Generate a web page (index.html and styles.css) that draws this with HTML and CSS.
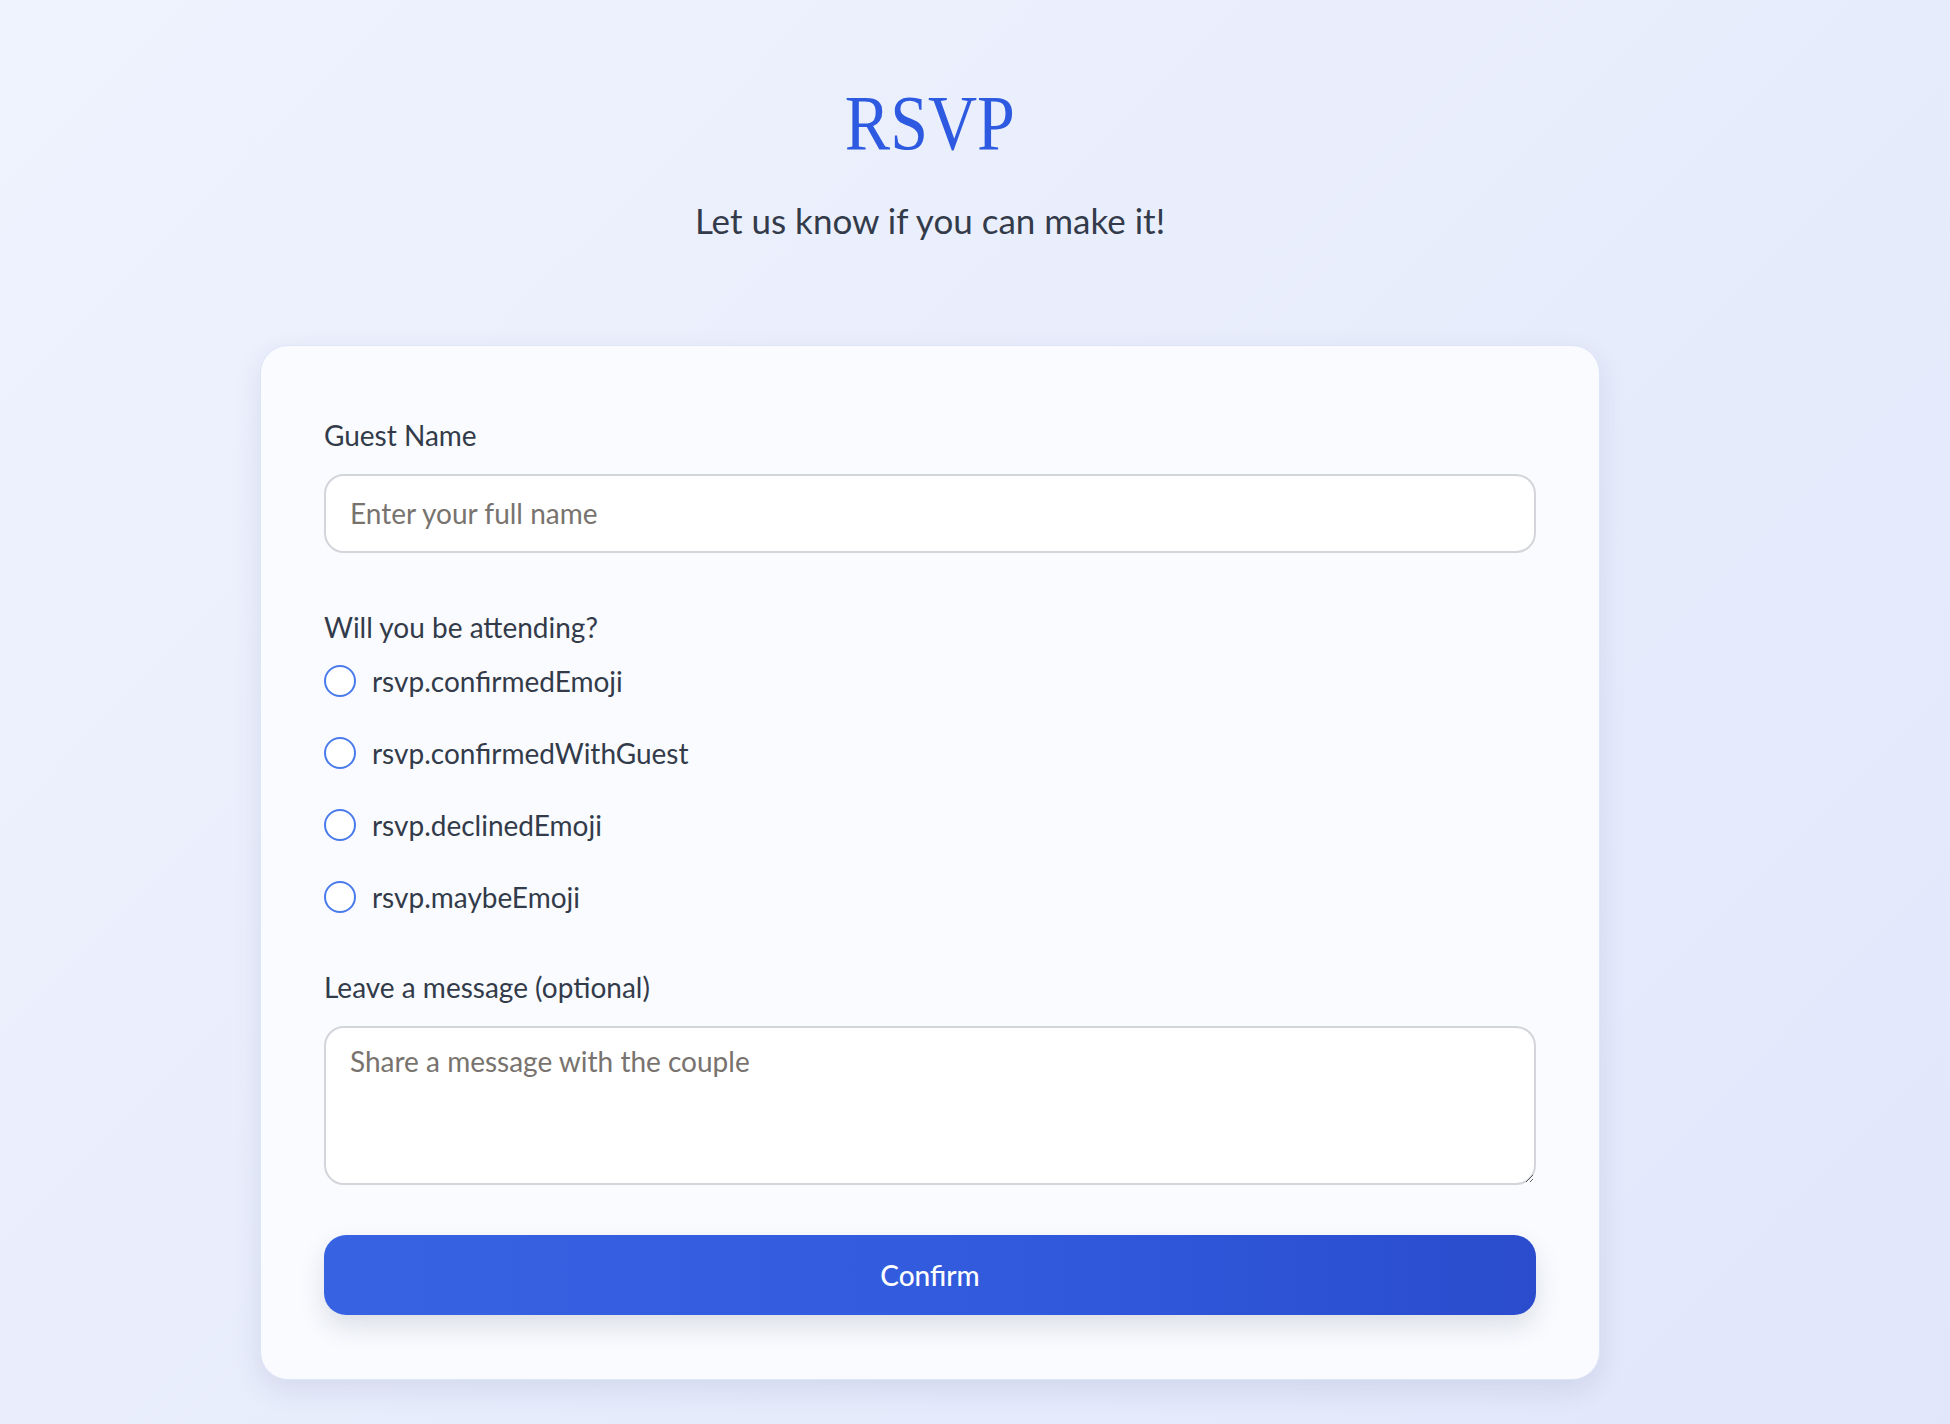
FILE: index.html
```html
<!DOCTYPE html>
<html lang="en">
<head>
<meta charset="utf-8">
<title>RSVP</title>
<link rel="stylesheet" href="styles.css">
</head>
<body>
<div class="page">
  <main class="container">
    <header class="hero">
      <h1 class="title"><span class="title-text">RSVP</span></h1>
      <p class="subtitle">Let us know if you can make it!</p>
    </header>
    <form class="card">
      <div class="field">
        <label class="label" for="name">Guest Name</label>
        <input class="input" id="name" type="text" placeholder="Enter your full name">
      </div>
      <div class="field field-attend">
        <div class="label label-attend">Will you be attending?</div>
        <div class="options">
          <label class="option"><input type="radio" name="att" class="radio"><span>rsvp.confirmedEmoji</span></label>
          <label class="option"><input type="radio" name="att" class="radio"><span>rsvp.confirmedWithGuest</span></label>
          <label class="option"><input type="radio" name="att" class="radio"><span>rsvp.declinedEmoji</span></label>
          <label class="option"><input type="radio" name="att" class="radio"><span>rsvp.maybeEmoji</span></label>
        </div>
      </div>
      <div class="field field-message">
        <label class="label" for="msg">Leave a message (optional)</label>
        <textarea class="textarea" id="msg" placeholder="Share a message with the couple"></textarea>
      </div>
      <button type="button" class="button">Confirm</button>
    </form>
  </main>
</div>
</body>
</html>
```

FILE: styles.css
```css
* { box-sizing: border-box; }
html, body { margin: 0; padding: 0; }
body {
  min-height: 1424px;
  background: linear-gradient(135deg, #eff3fe 0%, #e8edfc 50%, #e1e6fb 100%);
  font-family: Lato, "Noto Sans", sans-serif;
  color: #333b4a;
}
.page {
  width: 1860px;
  padding-top: 76px;
}
.container {
  width: 1340px;
  margin: 0 auto;
}
.hero { text-align: center; }
.title {
  margin: 0;
  font-family: "Liberation Serif", "Times New Roman", serif;
  font-weight: 400;
  font-size: 79px;
  line-height: 1.2;
  color: #2d5ae0;
}
.title-text {
  display: inline-block;
  transform: scaleX(0.86);
}
.subtitle {
  margin: 22px 0 0;
  font-size: 35px;
  line-height: 54px;
  color: #333b4a;
}
.card {
  margin-top: 98px;
  background: #f9fbff;
  border: 1px solid #dde5f8;
  border-radius: 28px;
  padding: 69px 63px 64px;
  box-shadow: 0 10px 28px rgba(35, 45, 95, 0.10);
  display: flex;
  flex-direction: column;
}
.label {
  display: block;
  font-size: 28px;
  line-height: 40px;
  color: #333b4a;
  margin-bottom: 19px;
}
.input {
  display: block;
  width: 100%;
  height: 79px;
  border: 2px solid #d3d5da;
  border-radius: 20px;
  background: #ffffff;
  padding: 0 24px;
  font-family: Lato, "Noto Sans", sans-serif;
  font-size: 28px;
  color: #333b4a;
  outline: none;
}
.input::placeholder, .textarea::placeholder { color: #78736e; opacity: 1; }
.field-attend { margin-top: 54px; }
.field-attend .label-attend { margin-bottom: 14px; }
.options {
  display: flex;
  flex-direction: column;
  gap: 32px;
}
.option {
  display: flex;
  align-items: center;
  gap: 16px;
  height: 40px;
  font-size: 28px;
  color: #333b4a;
}
.radio {
  appearance: none;
  -webkit-appearance: none;
  margin: 0;
  width: 32px;
  height: 32px;
  border: 2px solid #4a7bec;
  border-radius: 50%;
  background: #ffffff;
  flex: none;
}
.field-message { margin-top: 50px; }
.field-message .label { margin-bottom: 19px; }
.textarea {
  display: block;
  width: 100%;
  height: 159px;
  border: 2px solid #d3d5da;
  border-radius: 20px;
  background: #ffffff;
  padding: 17px 24px;
  font-family: Lato, "Noto Sans", sans-serif;
  font-size: 28px;
  line-height: 1.2;
  color: #333b4a;
  resize: vertical;
  outline: none;
}
.button {
  margin-top: 50px;
  height: 80px;
  width: 100%;
  border: none;
  border-radius: 22px;
  background: linear-gradient(90deg, #3763e2 0%, #3159dc 60%, #2a4ccd 100%);
  color: #ffffff;
  font-family: Lato, "Noto Sans", sans-serif;
  font-size: 28px;
  font-weight: 500;
  box-shadow: 0 12px 26px rgba(30, 35, 60, 0.13);
  cursor: pointer;
}
```
